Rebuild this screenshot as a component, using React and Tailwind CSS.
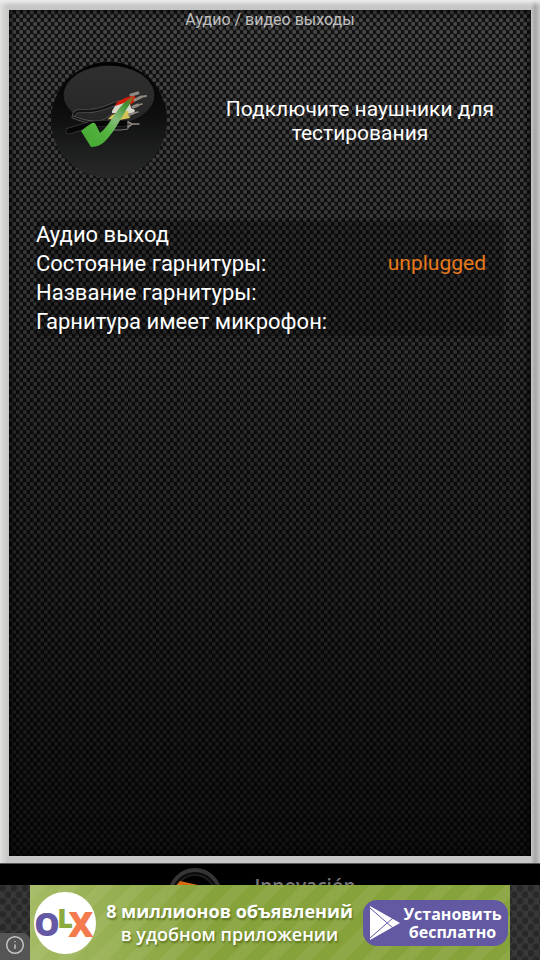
import { Info } from "lucide-react";

const rows = [
  { label: "Состояние гарнитуры:", value: "unplugged" },
  { label: "Название гарнитуры:", value: "" },
  { label: "Гарнитура имеет микрофон:", value: "" },
];

// Glossy round badge with RCA cables and a green tick
const CablesIcon = () => (
  <svg viewBox="0 0 118 118" className="w-[118px] h-[118px]" aria-hidden="true">
    <defs>
      <linearGradient id="disc" x1="0" y1="0" x2="0" y2="1">
        <stop offset="0" stopColor="#020202" />
        <stop offset="0.45" stopColor="#0e0e0e" />
        <stop offset="0.8" stopColor="#1f2020" />
        <stop offset="1" stopColor="#282828" />
      </linearGradient>
      <linearGradient id="gloss" x1="0" y1="0" x2="0" y2="1">
        <stop offset="0" stopColor="#2f2f2f" />
        <stop offset="1" stopColor="#262626" />
      </linearGradient>
      <linearGradient id="tick" x1="0" y1="1" x2="1" y2="0">
        <stop offset="0" stopColor="#41a72f" />
        <stop offset="0.4" stopColor="#54b440" />
        <stop offset="0.6" stopColor="#86bb7c" />
        <stop offset="0.85" stopColor="#3a9130" />
        <stop offset="1" stopColor="#b5521c" />
      </linearGradient>
    </defs>
    <circle cx="60" cy="58" r="58" fill="url(#disc)" />
    <ellipse cx="60" cy="33" rx="45" ry="29" fill="url(#gloss)" stroke="#343434" strokeWidth="0.6" />
    <g fill="none" strokeLinecap="round" strokeLinejoin="round">
      <path d="M25 53c1-5 6-4 14-4 14 0 20-5 32-9" stroke="#505050" strokeWidth="4" />
      <path d="M25 53c1-5 6-4 14-4 14 0 20-5 32-9" stroke="#141414" strokeWidth="2.4" />
      <path d="M24 55c10 4 22 7 30 4s8-6 14-9" stroke="#5c5c5c" strokeWidth="3" />
      <path d="M24 55c10 4 22 7 30 4s8-6 14-9" stroke="#1b1b1b" strokeWidth="1.6" />
      <path d="M20 69l20-6c14-3 24-1 37-2" stroke="#3c3c3c" strokeWidth="6.6" />
      <path d="M20 69l20-6c14-3 24-1 37-2" stroke="#070707" strokeWidth="5.4" />
      <path d="M56 68h16l7-1v-7" stroke="#777" strokeWidth="1" />
    </g>
    <path d="M66 44l2-4 8-4 9-3 3 5-7 5-8 2z" fill="#d01c0c" />
    <path d="M63 49l3-5 12-4 3 2 1 4 4 2-1 3-10 1-12-1z" fill="#d8d6c8" />
    <path d="M59 57l4-4 10-4h6l2 7-10 2z" fill="#d3c256" />
    <g fill="none" stroke="#8f8981" strokeLinecap="round" strokeLinejoin="round">
      <path d="M82 33l7-2M86 38l6-3" strokeWidth="3" />
      <path d="M91 35l6-1" strokeWidth="2" />
      <path d="M84 45l5-2" strokeWidth="3" />
      <path d="M89 43l4-1" strokeWidth="1.6" />
      <path d="M80 53l5-2" strokeWidth="2.4" />
      <path d="M85 51l4-1M79 60l4 2h7M79 65l4-3" strokeWidth="1.6" />
    </g>
    <path
      d="M32 69q6-5 11-8 3-1 4 2l4 8c12-9 16-28 34-37-2 6-6 10-9 16-6 10-11 19-17 26-5 6-10 9-17 9z"
      fill="url(#tick)"
    />
  </svg>
);

const OlxLogo = () => (
  <svg viewBox="0 0 62 62" className="w-[62px] h-[62px] shrink-0" role="img" aria-label="OLX">
    <circle cx="31" cy="31" r="31" fill="#fff" />
    <text fontFamily="Open Sans, Liberation Sans, sans-serif" fontWeight="800" textAnchor="middle">
      <tspan x="13" y="44" fontSize="32" fill="#6559a5">O</tspan>
      <tspan x="31" y="36" fontSize="27" fill="#8cab3e">L</tspan>
      <tspan x="47" y="45" fontSize="35" fill="#f47b4d">X</tspan>
    </text>
  </svg>
);

const PlayIcon = () => (
  <svg viewBox="0 0 32 36" className="w-8 h-9 shrink-0" aria-hidden="true">
    <path d="M1 1l30 17L1 35z" fill="#fff" />
    <path d="M1 3l23 20M1 33l23-20" fill="none" stroke="#6359a2" />
  </svg>
);

// Partner logo whose lower part runs under the ad
const PartnerStrip = () => (
  <div className="flex h-[21px] items-start justify-center gap-8 overflow-hidden bg-black pr-4">
    <svg viewBox="0 0 54 50" className="mt-1 h-[50px] w-[54px] shrink-0" aria-hidden="true">
      <circle cx="27" cy="27" r="25" fill="#0b0b0b" stroke="#353535" strokeWidth="4" />
      <circle cx="27" cy="27" r="20" fill="#000" stroke="#1e1e1e" strokeWidth="2" />
      <path d="M6 20l6-7 18 4-8 14z" fill="#d96a14" />
    </svg>
    <span className="mt-2 font-['Open_Sans',sans-serif] text-[19px] font-semibold text-[#777777]">
      Innovación
    </span>
  </div>
);

const AdBanner = () => (
  <div className="flex h-[75px] justify-center bg-[#383838] bg-[radial-gradient(circle_at_25%_25%,#282828_20%,transparent_34%),radial-gradient(circle_at_75%_75%,#282828_20%,transparent_34%)] bg-[length:11px_13px]">
    <div className="flex flex-1 items-end">
      <button
        aria-label="Info"
        className="flex h-[27px] w-full items-center justify-center rounded-tr-lg bg-[#555555] pb-1 text-[#c4c4c4]"
      >
        <Info size={20} strokeWidth={1.8} />
      </button>
    </div>
    <div className="flex w-[480px] shrink-0 items-center bg-[#86a23a] bg-[linear-gradient(90deg,rgba(200,215,150,0.45),transparent_38%),repeating-linear-gradient(135deg,rgba(255,255,255,0.07)_0_12px,transparent_12px_24px)] pl-1 pr-[2px] font-['Open_Sans',sans-serif] text-white">
      <OlxLogo />
      <div className="flex-1 whitespace-nowrap text-center text-[18px] leading-[23px] [text-shadow:1px_2px_2px_rgba(60,80,10,0.6)]">
        <p className="font-bold">8 миллионов объявлений</p>
        <p className="font-semibold">в удобном приложении</p>
      </div>
      <button className="flex h-[46px] w-[145px] shrink-0 items-center rounded-[14px] bg-[#6359a2] pl-[6px] pr-1 text-[16px] font-bold leading-[18px]">
        <PlayIcon />
        <span className="flex-1">
          Установить
          <br />
          бесплатно
        </span>
      </button>
    </div>
    <div className="flex-1" />
  </div>
);

const App = () => {
  return (
    <div className="flex min-h-screen flex-col bg-black font-[Roboto,sans-serif] text-white">
      {/* Metal frame */}
      <div className="flex flex-1 flex-col bg-[linear-gradient(90deg,#dededc,#c6c6c6_8px,#c6c6c6_calc(100%-9px),#a8a8a8_calc(100%-5px),#c4c4c4)] px-[9px] pt-[10px] pb-[7px] shadow-[inset_0_5px_4px_-2px_#eeeeee]">
        {/* Carbon panel */}
        <main className="flex-1 bg-[#101010] bg-[linear-gradient(180deg,transparent,rgba(0,0,0,0.4)_50%,rgba(0,0,0,0.75)),radial-gradient(circle_at_25%_25%,#484848_18%,transparent_36%),radial-gradient(circle_at_75%_75%,#484848_18%,transparent_36%)] bg-[length:100%_100%,7px_8px,7px_8px] px-[27px] shadow-[inset_0_0_8px_#000000]">
          <h1 className="text-center text-[16px] leading-5 text-[#c0c0c0]">
            Аудио / видео выходы
          </h1>

          <div className="mt-8 flex items-center gap-9">
            <div className="flex w-36 justify-center">
              <CablesIcon />
            </div>
            <p className="flex-1 text-center text-[21px] leading-6">
              Подключите наушники для тестирования
            </p>
          </div>

          <table className="mt-10 w-full bg-black/25 text-left text-[22px] leading-[29px]">
            <caption className="bg-black/25 text-left">Аудио выход</caption>
            <tbody>
              {rows.map((row) => (
                <tr key={row.label}>
                  <th scope="row" className="font-normal">{row.label}</th>
                  <td className="pr-[18px] text-right text-[21px] text-[#e8791a]">{row.value}</td>
                </tr>
              ))}
            </tbody>
          </table>
        </main>
      </div>

      <div className="h-px bg-[#555555]" />
      <PartnerStrip />
      <AdBanner />
    </div>
  );
};

export default App;
